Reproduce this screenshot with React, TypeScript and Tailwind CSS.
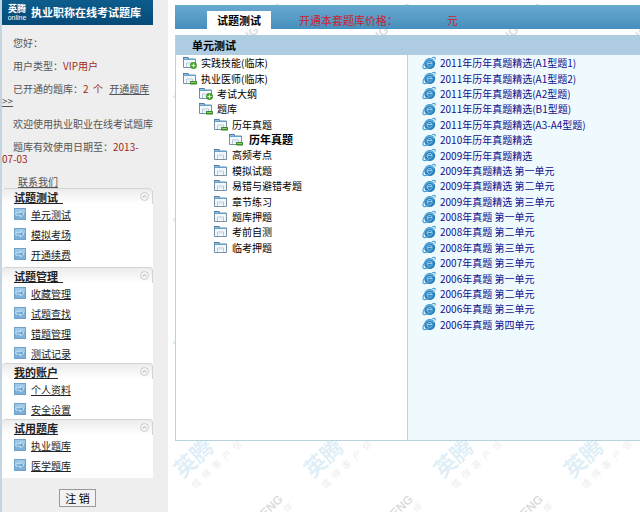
import { useState } from 'react';
import clsx from 'clsx';

type FolderState = 'closed' | 'open' | 'plain';

interface TreeItem {
  label: string;
  level: number;
  state: FolderState;
  active?: boolean;
}

const menus = [
  { title: '试题测试', trailing: true, items: ['单元测试', '模拟考场', '开通续费'] },
  { title: '试题管理', trailing: true, items: ['收藏管理', '试题查找', '错题管理', '测试记录'] },
  { title: '我的账户', trailing: false, items: ['个人资料', '安全设置'] },
  { title: '试用题库', trailing: false, items: ['执业题库', '医学题库'] },
];

const tree: TreeItem[] = [
  { label: '实践技能(临床)', level: 0, state: 'closed' },
  { label: '执业医师(临床)', level: 0, state: 'open' },
  { label: '考试大纲', level: 1, state: 'closed' },
  { label: '题库', level: 1, state: 'open' },
  { label: '历年真题', level: 2, state: 'open' },
  { label: '历年真题', level: 3, state: 'open', active: true },
  { label: '高频考点', level: 2, state: 'plain' },
  { label: '模拟试题', level: 2, state: 'plain' },
  { label: '易错与避错考题', level: 2, state: 'plain' },
  { label: '章节练习', level: 2, state: 'plain' },
  { label: '题库押题', level: 2, state: 'plain' },
  { label: '考前自测', level: 2, state: 'plain' },
  { label: '临考押题', level: 2, state: 'plain' },
];

const papers = [
  '2011年历年真题精选(A1型题1)',
  '2011年历年真题精选(A1型题2)',
  '2011年历年真题精选(A2型题)',
  '2011年历年真题精选(B1型题)',
  '2011年历年真题精选(A3-A4型题)',
  '2010年历年真题精选',
  '2009年历年真题精选',
  '2009年真题精选 第一单元',
  '2009年真题精选 第二单元',
  '2009年真题精选 第三单元',
  '2008年真题 第一单元',
  '2008年真题 第二单元',
  '2008年真题 第三单元',
  '2007年真题 第三单元',
  '2006年真题 第一单元',
  '2006年真题 第二单元',
  '2006年真题 第三单元',
  '2006年真题 第四单元',
];

const indents = ['pl-[7px]', 'pl-[23px]', 'pl-[38px]', 'pl-[53px]'];

function FolderIcon({ state }: { state: FolderState }) {
  return (
    <svg viewBox="0 0 14 13" className="h-[13px] w-[14px] shrink-0" aria-hidden="true">
      <path d="M.5 11.5V1.500h4.300l1 1.500h6.700v8.500z" fill="#f4f8fb" stroke="#7590a5" />
      <path d="M0 1h5.200l1 1.600H0z" fill="#4a80ad" />
      <path d="M1 3.500h11" stroke="#5aa4d8" />
      <path d="M3.500 11V7h6v4" fill="#fff" stroke="#b3cadb" />
      <path d="M4.500 9h4" stroke="#cbdbe6" />
      {state === 'closed' && (
        <>
          <circle cx="10.5" cy="9.500" r="3.400" fill="#3f9a28" />
          <path d="M10.500 7.500v4M8.500 9.500h4" stroke="#e4f8d2" strokeWidth="1.2" />
        </>
      )}
      {state === 'open' && (
        <>
          <rect x="7" y="9" width="7" height="3.500" rx=".8" fill="#3a8a27" />
          <path d="M8 10.500h5" stroke="#8ed06c" />
        </>
      )}
    </svg>
  );
}

function ExplorerIcon() {
  return (
    <svg viewBox="0 0 14 14" className="size-[14px] shrink-0" aria-hidden="true">
      <circle cx="7.700" cy="7.600" r="5.500" fill="#2a80bd" />
      <path d="M3.500 5.500a4.800 4.800 0 0 1 8.300 0" fill="none" stroke="#62b2e0" strokeWidth="1.3" />
      <path d="M10 9.300a2.600 2.600 0 1 1 .3-1.700H5.500" fill="none" stroke="#b4ddf2" strokeWidth=".9" />
      <path d="M10 2C12.500.6 13.800 1.300 12.800 3.600M4 5.500C2 7.300.8 9.500.9 11.200c.1 1.700 2 1.700 4.100.7 2-.9 4-2.300 6-4.200" fill="none" stroke="#4a9fd0" strokeWidth="1.2" />
    </svg>
  );
}

function ArrowIcon() {
  return (
    <svg viewBox="0 0 12 12" className="size-3 shrink-0" aria-hidden="true">
      <rect x=".5" y=".5" width="11" height="11" fill="#79afd9" stroke="#6fa3cc" />
      <path d="M1 1h10v4L1 7z" fill="#9bc8e8" />
      <path d="M2 4.800h4.500V3L10 6 6.500 9V7.200H2z" fill="#6aa6d4" stroke="#d9ecf8" strokeWidth=".8" />
    </svg>
  );
}

function Watermark() {
  return (
    <svg className="pointer-events-none absolute inset-0 h-full w-full" aria-hidden="true">
      <defs>
        <pattern id="mark" width="130" height="123" x="2" y="-61" patternUnits="userSpaceOnUse">
          <g fontFamily="'Noto Sans CJK SC', sans-serif">
            <text transform="translate(13 48) rotate(-43)" fontSize="22" fontWeight="700" fill="#e0eff7">英腾</text>
            <text transform="translate(25 58) rotate(-43)" fontSize="9" letterSpacing="5" fill="#ebebeb">值得客户信</text>
            <text transform="translate(68 112) rotate(-43)" fontSize="12" fontWeight="700" fill="#dcdcdc" fontFamily="'Liberation Sans', sans-serif">YINGTENG</text>
            <text transform="translate(117 82) rotate(-43)" fontSize="9" fill="#ebebeb">伴</text>
          </g>
        </pattern>
      </defs>
      <rect width="100%" height="100%" fill="url(#mark)" />
    </svg>
  );
}

function MenuSection({ title, trailing, items }: (typeof menus)[number]) {
  const [open, setOpen] = useState(true);

  return (
    <section className="bg-white first:pb-[3px] last:pb-[3px]">
      <div className="flex h-4 items-center justify-between rounded-t border-t border-r border-[#d4d4d4] bg-linear-to-b from-[#ececec] to-white pr-[3px] pl-3">
        <a href="#" className="text-[11px] leading-[14px] font-bold whitespace-pre text-[#222] underline">
          {title}{trailing && '  '}
        </a>
        <button
          type="button"
          aria-label={`${title} 折叠`}
          aria-expanded={open}
          onClick={() => setOpen(!open)}
          className="flex size-[9px] items-center justify-center rounded-full border border-[#d0d0d0] bg-[#f4f4f4]"
        >
          <svg viewBox="0 0 5 5" className="size-[5px]" aria-hidden="true">
            <path d="M.8 3.300 2.500 1.600l1.700 1.700" fill="none" stroke="#999" strokeWidth=".8" />
          </svg>
        </button>
      </div>
      {open && (
        <ul>
          {items.map((item) => (
            <li key={item} className="flex h-5 items-center gap-[5px] pl-3">
              <ArrowIcon />
              <a href="#" className="text-[#222] underline">{item}</a>
            </li>
          ))}
        </ul>
      )}
    </section>
  );
}

function Sidebar() {
  return (
    <aside className="w-[168px] shrink-0 border-l-2 border-[#c3d5e0] bg-[#eee] pr-[15px] text-[#555]">
      <header className="flex h-[25px] items-center gap-1 bg-linear-to-b from-[#0d5d8c] to-[#064a78] pl-[5px] text-white">
        <div className="flex w-5 flex-col items-center">
          <span className="text-[9px] leading-[10px] font-bold">英腾</span>
          <span className="font-['Liberation_Sans'] text-[7px] leading-[8px]">online</span>
        </div>
        <h1 className="text-[11px] font-bold whitespace-nowrap">执业职称在线考试题库</h1>
      </header>

      <div className="flex flex-col gap-[11px] pt-3 indent-[11px] leading-3">
        <p>您好：</p>
        <p>用户类型：<span className="text-[#a02820]">VIP用户</span></p>
        <p>
          已开通的题库：<span className="mr-1 text-[#a02820]">2 &nbsp;个</span>{' '}
          <a href="#" className="underline">开通题库 &gt;&gt;</a>
        </p>
        <p className="whitespace-nowrap">欢迎使用执业职业在线考试题库</p>
        <p>题库有效使用日期至：<span className="text-[#a02820]">2013-07-03</span></p>
        <p className="pl-[5px]"><a href="#" className="underline">联系我们</a></p>
      </div>

      <nav>
        {menus.map((menu) => (
          <MenuSection key={menu.title} {...menu} />
        ))}
      </nav>

      <div className="flex justify-center pt-[11px]">
        <button type="button" className="h-[18px] border border-[#999] bg-[#f3f3f3] px-[5px] text-[11px] leading-4 text-black">
          注 销
        </button>
      </div>
    </aside>
  );
}

export default function App() {
  return (
    <div className="flex min-h-screen overflow-hidden bg-white font-['Noto_Sans_CJK_SC',sans-serif] text-[10px] leading-[15px]">
      <Sidebar />

      <main className="relative min-w-0 flex-1 pt-[5px] pl-[7px]">
        <Watermark />
        <div className="relative">
          <header className="flex h-6 items-end bg-linear-to-b from-[#69a9d0] to-[#4590be] pl-8 text-[11px]">
            <h2 className="h-[18px] bg-white px-[10px] leading-[18px] font-bold">试题测试</h2>
            <p className="ml-7 flex gap-[49px] leading-[18px] text-[#d02030]">
              <span>开通本套题库价格：</span>
              <span>元</span>
            </p>
          </header>

          <section className="mt-[6px] border-b border-l border-[#b9d3dc] bg-white">
            <h3 className="h-5 bg-[#afcde2] pl-4 text-[11px] leading-5 font-bold">单元测试</h3>
            <div className="flex min-h-[385px]">
              <div className="w-[231px] shrink-0">
                <ul className="grid h-[200px] auto-rows-fr">
                  {tree.map((item, i) => (
                    <li key={i} className={clsx('flex items-center gap-1', indents[item.level])}>
                      <FolderIcon state={item.state} />
                      <a href="#" className={clsx('text-black', item.active && 'pl-[2px] text-[11px] font-bold')}>{item.label}</a>
                    </li>
                  ))}
                </ul>
              </div>
              <div className="flex-1 border-l border-[#b9d3e0] bg-[#effaff] pl-[14px]">
                <ul className="grid h-[277px] auto-rows-fr">
                  {papers.map((paper) => (
                    <li key={paper} className="flex items-center gap-1">
                      <ExplorerIcon />
                      <a href="#" className="text-[#10108c]">{paper}</a>
                    </li>
                  ))}
                </ul>
              </div>
            </div>
          </section>
        </div>
      </main>
    </div>
  );
}
